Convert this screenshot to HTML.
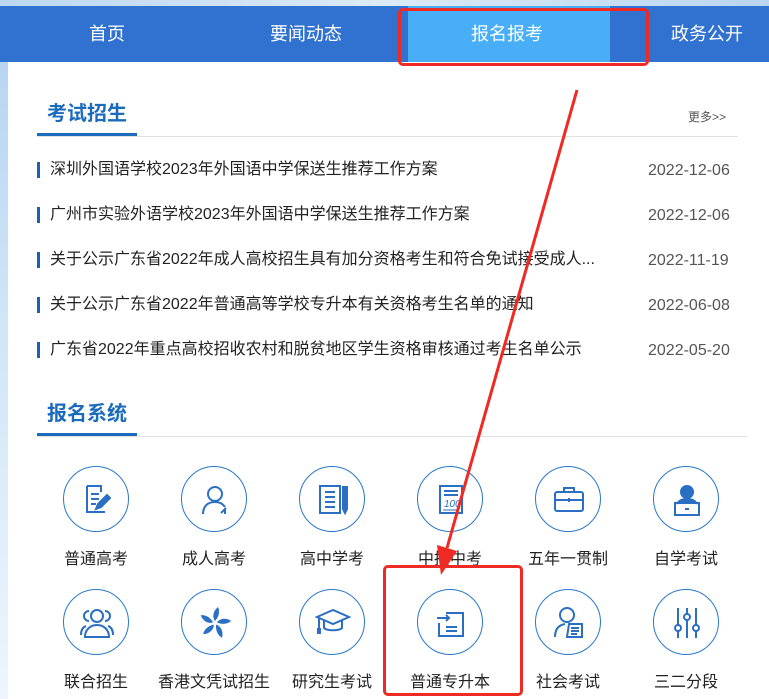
<!DOCTYPE html>
<html><head><meta charset="utf-8"><style>
*{margin:0;padding:0;box-sizing:border-box}
body{width:769px;height:699px;overflow:hidden;background:#fff;font-family:"Liberation Sans","Noto Sans CJK SC",sans-serif;position:relative}
.bgtop{position:absolute;left:0;top:0;width:769px;height:6px;background:linear-gradient(90deg,#bcd8f0,#dceaf6,#b9d6f0)}
.bgleft{position:absolute;left:0;top:62px;width:8px;height:637px;background:linear-gradient(180deg,#b7d6f2,#cfe5f8 40%,#eef5fc)}
.nav{position:absolute;left:0;top:6px;width:769px;height:56px;background:#3172d0}
.nav span{position:absolute;top:0;line-height:56px;color:#fff;font-size:18px}
.act{position:absolute;left:408px;top:6px;width:202px;height:56px;background:#48aef7}
.t{position:absolute;color:#1b6bbd;font-weight:bold;font-size:20px}
.ul{position:absolute;height:3px;background:#1b6bbd}
.gl{position:absolute;height:1px;background:#e2e2e2}
.li{position:absolute;left:37px;font-size:16px;color:#222;white-space:nowrap;line-height:20px}
.li:before{content:"";position:absolute;left:0;top:2px;width:3px;height:16px;background:#2060b0}
.li b{font-weight:normal;position:absolute;left:13px}
.dt{position:absolute;left:648px;font-size:16px;color:#555;line-height:20px}
.ic{position:absolute;width:66px;height:66px;border:1.2px solid #2a78c8;border-radius:50%}
.ic svg{position:absolute;left:15px;top:15px}
.lb{position:absolute;width:130px;text-align:center;font-size:16px;color:#222}
</style></head><body>
<div class="bgtop"></div>
<div class="nav"></div>
<div class="act"></div>
<div class="nav" style="background:none">
<span style="left:89px">首页</span>
<span style="left:270px">要闻动态</span>
<span style="left:471px">报名报考</span>
<span style="left:671px">政务公开</span>
</div>
<div class="bgleft"></div>
<div style="position:absolute;left:398px;top:8px;width:251px;height:58px;border:3px solid #ee2a24;border-radius:5px"></div>

<div class="t" style="left:47px;top:97px">考试招生</div>
<div class="gl" style="left:37px;top:136px;width:701px"></div>
<div class="ul" style="left:37px;top:133px;width:100px"></div>
<div style="position:absolute;left:688px;top:108px;font-size:12px;color:#555">更多&gt;&gt;</div>

<div class="li" style="top:160px"><b>深圳外国语学校2023年外国语中学保送生推荐工作方案</b></div><div class="dt" style="top:161px">2022-12-06</div>
<div class="li" style="top:205px"><b>广州市实验外语学校2023年外国语中学保送生推荐工作方案</b></div><div class="dt" style="top:206px">2022-12-06</div>
<div class="li" style="top:250px"><b>关于公示广东省2022年成人高校招生具有加分资格考生和符合免试接受成人...</b></div><div class="dt" style="top:251px">2022-11-19</div>
<div class="li" style="top:295px"><b>关于公示广东省2022年普通高等学校专升本有关资格考生名单的通知</b></div><div class="dt" style="top:296px">2022-06-08</div>
<div class="li" style="top:340px"><b>广东省2022年重点高校招收农村和脱贫地区学生资格审核通过考生名单公示</b></div><div class="dt" style="top:341px">2022-05-20</div>

<div class="t" style="left:47px;top:397px">报名系统</div>
<div class="gl" style="left:37px;top:436px;width:710px"></div>
<div class="ul" style="left:37px;top:433px;width:100px"></div>

<div class="ic" style="left:63px;top:466px"><svg width="36" height="36" viewBox="0 0 36 36" fill="none" stroke="#2a6fc4" stroke-width="2"><path d="M8 4h14v6M8 4v26h18"/><path d="M12 12h8M12 17h8M12 22h5"/><path d="M17 27l2-5 9-9 3 3-9 9z" fill="#2a6fc4"/></svg></div>
<div class="ic" style="left:181px;top:466px"><svg width="36" height="36" viewBox="0 0 36 36" fill="none" stroke="#2a6fc4" stroke-width="2"><circle cx="18" cy="12" r="7"/><path d="M6 32c0-8 5-12 12-12 5 0 8 2 10 5"/><path d="M24 31l5-5M28 27v5"/></svg></div>
<div class="ic" style="left:299px;top:466px"><svg width="36" height="36" viewBox="0 0 36 36" fill="none" stroke="#2a6fc4" stroke-width="2"><rect x="5" y="4" width="20" height="27"/><path d="M10 10h10M10 15h10M10 20h10M10 25h10"/><path d="M28 5h4v22l-2 4-2-4z" fill="#2a6fc4"/></svg></div>
<div class="ic" style="left:417px;top:466px"><svg width="36" height="36" viewBox="0 0 36 36" fill="none" stroke="#2a6fc4" stroke-width="2"><rect x="7" y="4" width="22" height="27"/><path d="M11 9h14M11 13h14"/><text x="11" y="25" font-size="10" fill="#2a6fc4" stroke="none" font-style="italic">100</text><path d="M10 28h16" stroke-width="1"/></svg></div>
<div class="ic" style="left:535px;top:466px"><svg width="36" height="36" viewBox="0 0 36 36" fill="none" stroke="#2a6fc4" stroke-width="2"><rect x="4" y="10" width="28" height="19" rx="2"/><path d="M13 10V6h10v4M4 18h28M18 16v4"/></svg></div>
<div class="ic" style="left:653px;top:466px"><svg width="36" height="36" viewBox="0 0 36 36" fill="none" stroke="#2a6fc4" stroke-width="2"><circle cx="18" cy="10" r="6" fill="#2a6fc4"/><path d="M8 22c2-4 6-5 10-5s8 1 10 5" fill="#2a6fc4"/><rect x="6" y="21" width="24" height="12"/><path d="M16 27h4"/></svg></div>
<div class="lb" style="left:31px;top:545px">普通高考</div>
<div class="lb" style="left:149px;top:545px">成人高考</div>
<div class="lb" style="left:267px;top:545px">高中学考</div>
<div class="lb" style="left:385px;top:545px">中招中考</div>
<div class="lb" style="left:503px;top:545px">五年一贯制</div>
<div class="lb" style="left:621px;top:545px">自学考试</div>

<div class="ic" style="left:63px;top:589px"><svg width="36" height="36" viewBox="0 0 36 36" fill="none" stroke="#2a6fc4" stroke-width="2"><circle cx="18" cy="11" r="6"/><path d="M6 32c0-7 5-12 12-12s12 5 12 12z"/><path d="M10 6a5 5 0 0 0 0 10M26 6a5 5 0 0 1 0 10M2 30c0-5 2-8 5-9M34 30c0-5-2-8-5-9"/></svg></div>
<div class="ic" style="left:181px;top:589px"><svg width="36" height="36" viewBox="0 0 36 36" fill="#2a6fc4"><g transform="translate(18 18)"><path id="p" d="M0 -2c-3-4-2-10 3-14 2 4 1 10-3 14z"/><use href="#p" transform="rotate(72)"/><use href="#p" transform="rotate(144)"/><use href="#p" transform="rotate(216)"/><use href="#p" transform="rotate(288)"/></g></svg></div>
<div class="ic" style="left:299px;top:589px"><svg width="36" height="36" viewBox="0 0 36 36" fill="none" stroke="#2a6fc4" stroke-width="2"><path d="M2 12l16-7 16 7-16 7z"/><path d="M9 15v8c3 3 15 3 18 0v-8"/><path d="M4 13v12"/><rect x="3" y="24" width="2" height="4" fill="#2a6fc4"/></svg></div>
<div class="ic" style="left:417px;top:589px"><svg width="36" height="36" viewBox="0 0 36 36" fill="none" stroke="#2a6fc4" stroke-width="2"><path d="M13 8h17v23H6V18"/><path d="M4 13h12M13 10l3 3-3 3M13 22h11M13 26h11"/></svg></div>
<div class="ic" style="left:535px;top:589px"><svg width="36" height="36" viewBox="0 0 36 36" fill="none" stroke="#2a6fc4" stroke-width="2"><circle cx="16" cy="10" r="7"/><path d="M4 32c0-8 4-12 10-13"/><path d="M18 19h13v13H16z"/><path d="M20 23h8M20 26h8M20 29h6"/></svg></div>
<div class="ic" style="left:653px;top:589px"><svg width="36" height="36" viewBox="0 0 36 36" fill="none" stroke="#2a6fc4" stroke-width="2"><path d="M9 3v30M18 3v30M27 3v30"/><circle cx="9" cy="23" r="3" fill="#fff"/><circle cx="18" cy="12" r="3" fill="#fff"/><circle cx="27" cy="23" r="3" fill="#fff"/></svg></div>
<div class="lb" style="left:31px;top:668px">联合招生</div>
<div class="lb" style="left:149px;top:668px">香港文凭试招生</div>
<div class="lb" style="left:267px;top:668px">研究生考试</div>
<div class="lb" style="left:385px;top:668px">普通专升本</div>
<div class="lb" style="left:503px;top:668px">社会考试</div>
<div class="lb" style="left:621px;top:668px">三二分段</div>

<div style="position:absolute;left:383px;top:565px;width:140px;height:131px;border:3px solid #ee2a24;border-radius:5px"></div>
<svg style="position:absolute;left:0;top:0" width="769" height="699"><path d="M577 90L447 548" stroke="#ee2a24" stroke-width="3"/><path d="M437 545L441 575L457 551z" fill="#ee2a24"/></svg>
</body></html>
